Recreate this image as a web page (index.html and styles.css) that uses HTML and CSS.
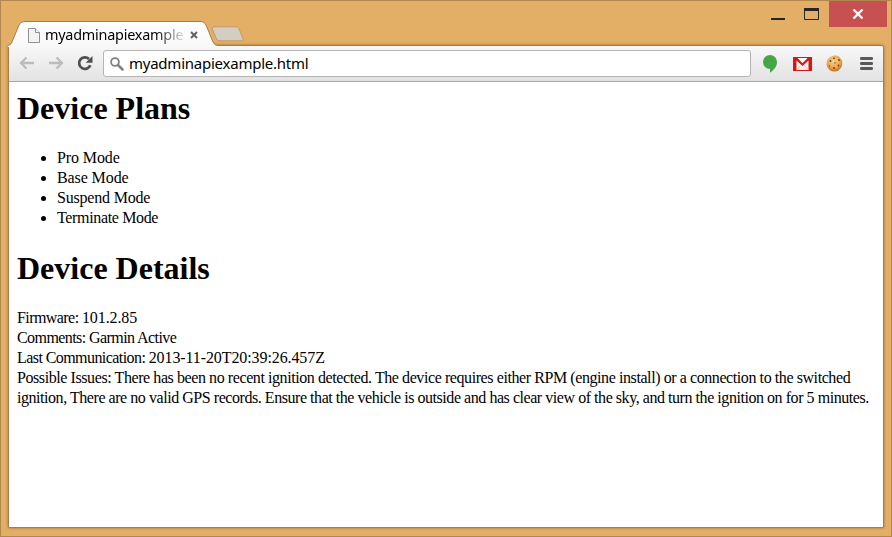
FILE: index.html
```html
<!DOCTYPE html>
<html lang="en">
<head>
<meta charset="utf-8">
<title>myadminapiexample.html</title>
<link rel="stylesheet" href="styles.css">
</head>
<body>
<div class="window">
  <header class="titlebar">
    <div class="tab">
      <svg class="tab-shape" width="210" height="26" viewBox="0 0 210 26">
        <defs><linearGradient id="tabfill" x1="0" y1="0" x2="0" y2="1"><stop offset="0" stop-color="#fff"/><stop offset="1" stop-color="#f8f8f8"/></linearGradient></defs>
        <path d="M0 26V24Q3 24 4 21L11 4Q12.500 .5 16 .5H193Q196.500 .5 198 4L205 21Q206.500 24.500 210 24.500V26Z" fill="url(#tabfill)"/>
        <path d="M0 24.500Q3 24 4 21L11 4Q12.500 .5 16 .5H193Q196.500 .5 198 4L205 21Q206.500 24.500 210 24.500" fill="none" stroke="#a87d49"/>
      </svg>
      <svg class="page-icon" width="12" height="15" viewBox="0 0 12 15"><path d="M.5.5h7l4 4v10H.5z" fill="#f3f3f3" stroke="#919191"/><path d="M7.500.5v4h4" fill="#fff" stroke="#919191"/></svg>
      <span class="tab-title">myadminapiexample</span>
      <svg class="tab-close" width="8" height="8" viewBox="0 0 8 8"><path d="M1 1l6 6M7 1L1 7" stroke="#606060" stroke-width="1.900"/></svg>
    </div>
    <svg class="new-tab" width="33" height="16" viewBox="0 0 33 16"><path d="M3 .8h22q2 0 3 2l4 10q.8 2-1.500 2H9q-2.500 0-3.500-2L1.300 3Q.5.8 3 .8z" fill="#d4cec2" stroke="#c59b62"/></svg>
    <div class="controls">
      <svg class="minimize" width="14" height="2"><path d="M0 1h14" stroke="#252525" stroke-width="2"/></svg>
      <svg class="maximize" width="15" height="12"><path d="M.5 1v10.500h14V1" fill="none" stroke="#252525"/><path d="M0 1.500h15" stroke="#252525" stroke-width="3"/></svg>
      <div class="close"><svg width="12" height="10" viewBox="0 0 12 10"><path d="M1.500.5l9 9M10.500.5l-9 9" stroke="#fff" stroke-width="2.300"/></svg></div>
    </div>
  </header>
  <main class="browser">
    <nav class="toolbar">
      <svg class="back" width="16" height="14" viewBox="0 0 16 14"><path d="M15 7H2.500M7.500 1.500L2 7l5.500 5.500" fill="none" stroke="#bcbcbc" stroke-width="2.300"/></svg>
      <svg class="forward" width="16" height="14" viewBox="0 0 16 14"><path d="M1 7h12.500M8.500 1.500L14 7l-5.500 5.500" fill="none" stroke="#bcbcbc" stroke-width="2.300"/></svg>
      <svg class="reload" width="16" height="16" viewBox="0 0 16 16"><path d="M12 4A5.800 5.800 0 1 0 13.300 10.300" fill="none" stroke="#4e4e4e" stroke-width="2.700"/><path d="M15.500 1v6.800H8.700z" fill="#4e4e4e"/></svg>
      <div class="address">
        <svg width="14" height="14" viewBox="0 0 14 14"><circle cx="5" cy="5" r="3.900" fill="none" stroke="#828282" stroke-width="1.800"/><path d="M8 8l4.500 4.500" stroke="#828282" stroke-width="2.500" stroke-linecap="round"/></svg>
        <span>myadminapiexample.html</span>
      </div>
      <svg class="hangouts" width="14" height="18" viewBox="0 0 14 18"><path d="M7 0a7 7 0 0 1 7 7c0 4.500-3 8-7 10.800V14A7 7 0 0 1 7 0z" fill="#46a545"/></svg>
      <svg class="gmail" width="19" height="14" viewBox="0 0 19 14"><path d="M0 0h19v14H0z" fill="#d51615"/><path d="M3.500 3.500v9.500h12V3.500l-6 5.500z" fill="#fff3ef"/><path d="M4.500 1h10l-5 5.300z" fill="#fff"/><path d="M4 12.500l4-4M15 12.500l-4-4" stroke="#f1bbb5"/></svg>
      <svg class="cookie" width="17" height="17" viewBox="0 0 17 17"><defs><radialGradient id="cookiefill" cx=".45" cy=".35" r=".65"><stop offset="0" stop-color="#fbd08b"/><stop offset=".65" stop-color="#e9a54d"/><stop offset="1" stop-color="#c66b20"/></radialGradient></defs><path d="M8 .5q3-.5 5 1l2 2.500q2 2 1.200 5-.2 3-2.200 5-2 2.500-5 2.500-3 .2-5.500-1.500Q.8 12.500.5 9.500.2 6 2 4q2-3 6-3.500z" fill="url(#cookiefill)"/><g fill="#65401f"><circle cx="8" cy="3.300" r=".9"/><circle cx="13" cy="5" r=".9"/><circle cx="4.500" cy="6" r=".9"/><circle cx="9" cy="8" r=".7"/><circle cx="3.500" cy="11" r=".7"/><circle cx="12.500" cy="10.500" r=".9"/><circle cx="8" cy="13" r=".9"/></g></svg>
      <svg class="menu" width="13" height="13" viewBox="0 0 13 13"><path d="M1.300 1.500h10.400M1.300 6.500h10.400M1.300 11.500h10.400" stroke="#5a5a5a" stroke-width="2.800" stroke-linecap="round"/></svg>
    </nav>
    <article class="content">
      <h1>Device Plans</h1>
      <ul>
        <li>Pro Mode</li>
        <li>Base Mode</li>
        <li class="suspend">Suspend Mode</li>
        <li class="long">Terminate Mode</li>
      </ul>
      <h1>Device Details</h1>
      <div class="details">
        <p>Firmware: <span class="num">101.2.85</span></p>
        <p>Comments: Garmin Active</p>
        <p>Last Communication: <span class="num">2013-11-20T20:39:26.457Z</span></p>
        <p class="issue-first">Possible Issues: There has been no recent ignition detected. The device requires either RPM (engine install) or a connection to the switched</p>
        <p class="issue-second">ignition, There are no valid GPS records. Ensure that the vehicle is outside and has clear view of the sky, and turn the ignition on for 5 minutes.</p>
      </div>
    </article>
  </main>
</div>
</body>
</html>
```
FILE: styles.css
```css
* { box-sizing: border-box; }
body { margin: 0; }
svg { display: block; flex: none; }
.window {
  width: 892px;
  height: 537px;
  padding: 0 7px 8px;
  border: 1px solid #af874f;
  background: #e3ae65;
  overflow: hidden;
}
.titlebar { display: flex; height: 44px; }
.tab {
  position: relative;
  z-index: 1;
  display: flex;
  width: 210px;
  height: 25px;
  margin-top: 20px;
  padding-left: 20px;
}
.tab-shape { position: absolute; left: 0; top: 0; }
.page-icon { position: relative; margin-top: 7px; }
.tab-title {
  position: relative;
  width: 139px;
  margin: 3px 0 0 5px;
  white-space: nowrap;
  font: 14.400px/22px "Noto Sans", sans-serif;
  letter-spacing: -.22px;
  color: #000;
  -webkit-mask-image: linear-gradient(to right, #000 110px, transparent 142px);
  mask-image: linear-gradient(to right, #000 110px, transparent 142px);
}
.tab-close { position: relative; margin: 10px 0 0 6px; }
.new-tab { margin: 25px 0 0 -7px; }
.controls { display: flex; margin-left: auto; margin-right: -3px; }
.minimize { margin-top: 17px; }
.maximize { margin: 7px 10px 0 19px; }
.close {
  display: flex;
  align-items: center;
  justify-content: center;
  width: 58px;
  height: 26px;
  background: #c75050;
}
.browser {
  height: 483px;
  border: 1px solid #a57d4a;
  border-radius: 3px 3px 1px 1px;
  background: #fff;
  box-shadow: 0 0 3px #9d713b;
}
.toolbar {
  display: flex;
  align-items: center;
  height: 36px;
  padding: 0 10px;
  border-bottom: 1px solid #a7a7a7;
  border-radius: 2px 2px 0 0;
  background: linear-gradient(#f8f8f8, #e2e2e2);
}
.back, .forward, .reload { margin-bottom: 1px; }
.forward { margin-left: 13px; }
.reload { margin-left: 13px; }
.address {
  display: flex;
  align-items: center;
  width: 649px;
  height: 27px;
  margin-left: 10px;
  padding-left: 6px;
  border: 1px solid #b5b5b5;
  border-radius: 3px;
  background: #fff;
}
.address span {
  margin: 0 0 2px 5px;
  font: 15px/24px "Noto Sans", sans-serif;
  letter-spacing: -.24px;
}
.hangouts { margin-left: 12px; }
.gmail { margin-left: 16px; }
.cookie { margin-left: 14px; }
.menu { margin-left: 17px; }
.content {
  padding: 8px 8px 0;
  font: 16px/20px "Liberation Serif", serif;
  color: #000;
}
h1 { margin: 0; font-size: 32px; line-height: 36px; }
ul { margin: 22px 0; padding-left: 40px; letter-spacing: -.1px; }
.suspend { letter-spacing: -.2px; }
.long { letter-spacing: -.35px; }
.details { margin-top: 22px; letter-spacing: -.57px; }
p { margin: 0; white-space: nowrap; }
.num { letter-spacing: -.1px; }
.issue-first { letter-spacing: -.417px; }
.issue-second { letter-spacing: -.451px; }
```
